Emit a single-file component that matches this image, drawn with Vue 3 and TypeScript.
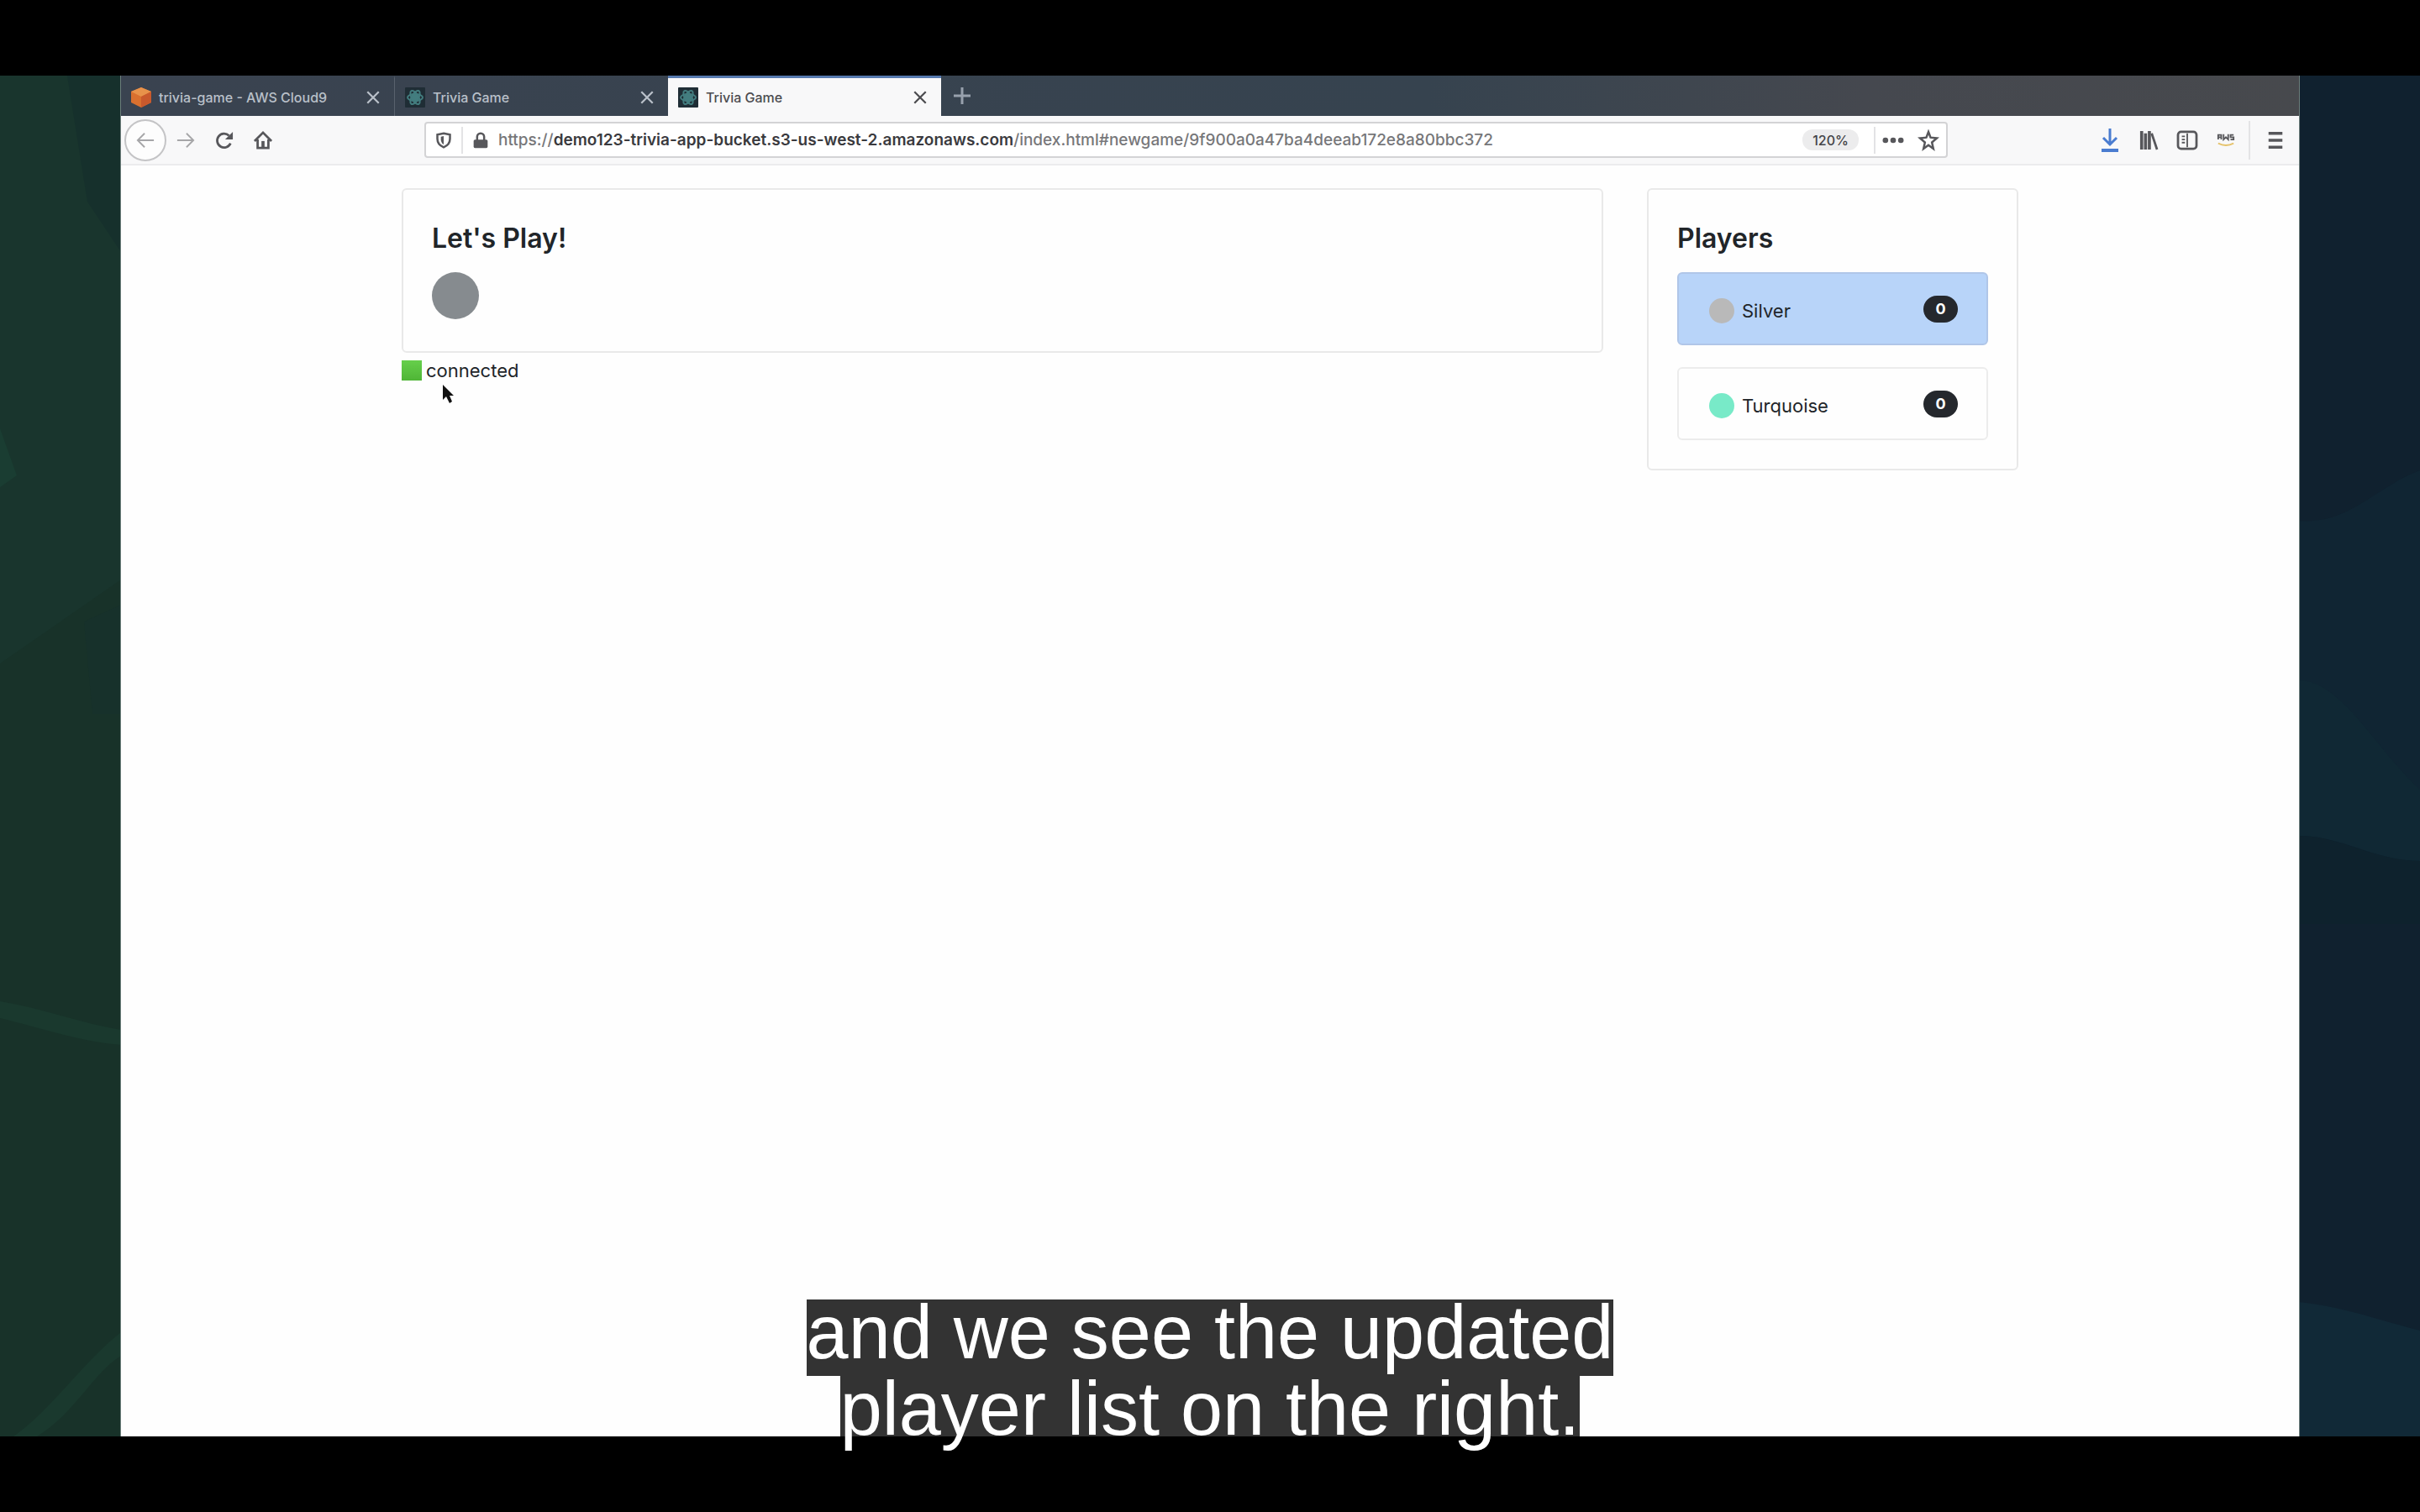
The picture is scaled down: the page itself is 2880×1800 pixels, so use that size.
<script setup lang="ts">
interface Tab {
  title: string
  icon: 'cube' | 'react'
  active: boolean
}

interface Player {
  name: string
  color: string
  score: number
  current: boolean
}

const tabs: Tab[] = [
  { title: 'trivia-game - AWS Cloud9', icon: 'cube', active: false },
  { title: 'Trivia Game', icon: 'react', active: false },
  { title: 'Trivia Game', icon: 'react', active: true },
]

const players: Player[] = [
  { name: 'Silver', color: '#b9b9b9', score: 0, current: true },
  { name: 'Turquoise', color: '#78eac8', score: 0, current: false },
]

const captionLines: string[] = ['and we see the updated', 'player list on the right.']
</script>

<template>
  <div class="screen">
    <div class="stage">
      <svg class="art" viewBox="0 0 144 1620" preserveAspectRatio="none" aria-hidden="true">
        <rect width="144" height="1620" fill="#183229" />
        <path d="M0 0H144V600L0 700Z" fill="#19352d" />
        <path d="M80 0H144V210L104 150Z" fill="#16302c" />
        <path d="M0 420L20 476L0 490Z" fill="#1a3d32" />
        <path d="M100 650L144 630V760H110Z" fill="#17312b" />
        <path d="M0 1102C50 1110 95 1128 144 1136V1154C95 1150 50 1134 0 1122Z" fill="#1a392e" />
        <path d="M16 1620C60 1590 100 1530 144 1496V1524C110 1545 90 1592 44 1620Z" fill="#1a392e" />
      </svg>

      <div class="browser">
        <div class="tabstrip" role="tablist">
          <div v-for="(tab, i) in tabs" :key="i" class="tab" :class="{ active: tab.active }">
            <button class="tab-main" type="button" role="tab" :aria-selected="tab.active">
              <svg v-if="tab.icon === 'cube'" class="favicon" viewBox="0 0 24 24" aria-hidden="true">
                <path d="M12 0L24 5V18L12 24L0 18V5Z" fill="#d9702f" />
                <path d="M12 0L24 5L12 11L0 5Z" fill="#e8924a" />
                <path d="M12 11L24 5V18L12 24Z" fill="#c9592c" />
              </svg>
              <svg v-else class="favicon" viewBox="0 0 24 24" aria-hidden="true">
                <rect width="24" height="24" rx="1" fill="#1f2d35" />
                <g fill="none" stroke="#437d7f" stroke-width="2">
                  <ellipse cx="12" cy="12" rx="9" ry="4" />
                  <ellipse cx="12" cy="12" rx="9" ry="4" transform="rotate(60 12 12)" />
                  <ellipse cx="12" cy="12" rx="9" ry="4" transform="rotate(120 12 12)" />
                </g>
                <circle cx="12" cy="12" r="4" fill="#437d7f" />
              </svg>
              <span>{{ tab.title }}</span>
            </button>
            <button class="close" type="button" aria-label="Close tab">
              <svg viewBox="0 0 16 16" aria-hidden="true"><path d="M2 2L14 14M14 2L2 14" /></svg>
            </button>
          </div>
          <button class="new-tab" type="button" aria-label="New tab">
            <svg viewBox="0 0 20 20" aria-hidden="true"><path d="M10 0V20M0 10H20" /></svg>
          </button>
        </div>

        <div class="toolbar">
          <div class="nav">
            <button class="back" type="button" aria-label="Back">
              <svg class="icon faint" viewBox="0 0 24 24" aria-hidden="true"><path d="M23 12H2M11 3L2 12L11 21" /></svg>
            </button>
            <button class="tool" type="button" aria-label="Forward">
              <svg class="icon faint" viewBox="0 0 24 24" aria-hidden="true"><path d="M1 12H22M13 3L22 12L13 21" /></svg>
            </button>
            <button class="tool" type="button" aria-label="Reload">
              <svg class="icon" viewBox="0 0 24 24" aria-hidden="true">
                <path class="thick" d="M20 16A9 9 0 1 1 18 6" />
                <path class="solid" d="M23 1V11H13Z" />
              </svg>
            </button>
            <button class="tool" type="button" aria-label="Home">
              <svg class="icon" viewBox="0 0 24 24" aria-hidden="true">
                <path class="thick" d="M1 13L12 2L23 13M5 11V22H19V11" />
                <path class="solid" d="M10 13H14V22H10Z" />
              </svg>
            </button>
          </div>

          <div class="urlbar">
            <button class="tool small" type="button" aria-label="Tracking protection">
              <svg class="icon" viewBox="0 0 24 24" aria-hidden="true">
                <path class="thick" d="M12 2L21 4V10C21 16 17 20 12 22C7 20 3 16 3 10V4Z" />
                <path class="solid" d="M12 6L8 7V11C8 14 10 17 12 18Z" />
              </svg>
            </button>
            <span class="divider"></span>
            <button class="tool small" type="button" aria-label="Site information">
              <svg class="icon" viewBox="0 0 24 24" aria-hidden="true">
                <path class="thick" d="M7 12V7A5 5 0 0 1 17 7V12" />
                <rect class="solid" x="2" y="11" width="20" height="12" rx="2" />
              </svg>
            </button>
            <div class="address" role="textbox" aria-label="Address" contenteditable="true" spellcheck="false"><span>https://</span><b>demo123-trivia-app-bucket.s3-us-west-2.amazonaws.com</b><span>/index.html#newgame/9f900a0a47ba4deeab172e8a80bbc372</span></div>
            <button class="zoom" type="button">120%</button>
            <span class="divider"></span>
            <button class="tool small" type="button" aria-label="Page actions">
              <svg class="icon" viewBox="0 0 24 24" aria-hidden="true">
                <circle class="solid" cx="1" cy="12" r="4" />
                <circle class="solid" cx="12" cy="12" r="4" />
                <circle class="solid" cx="23" cy="12" r="4" />
              </svg>
            </button>
            <button class="tool small" type="button" aria-label="Bookmark this page">
              <svg class="icon" viewBox="0 0 24 24" aria-hidden="true">
                <path class="thick" d="M12 0L15 8L24 9L17 15L19 24L12 19L5 24L7 15L0 9L9 8Z" />
              </svg>
            </button>
          </div>

          <div class="extras">
            <button class="tool" type="button" aria-label="Downloads">
              <svg class="icon blue" viewBox="0 0 24 28" aria-hidden="true">
                <path class="thick" d="M12 0V19M4 11L12 19L20 11" />
                <path class="bar" d="M2 26H22" />
              </svg>
            </button>
            <button class="tool" type="button" aria-label="Library">
              <svg class="icon" viewBox="0 0 24 24" aria-hidden="true">
                <path class="bar" d="M3 0V24M8 3V24M13 0V24" />
                <path class="thick" d="M16 3L23 24" />
              </svg>
            </button>
            <button class="tool" type="button" aria-label="Sidebars">
              <svg class="icon" viewBox="0 0 24 24" aria-hidden="true">
                <rect class="thick" x="0" y="1" width="24" height="22" rx="4" />
                <path d="M12 3V21M5 7H9M5 11H9M5 15H9" />
              </svg>
            </button>
            <button class="tool" type="button" aria-label="AWS extension">
              <svg class="icon" viewBox="0 0 24 24" aria-hidden="true">
                <path d="M2 11V5H6V11M2 8H6M9 4V11L12 8L15 11V4M22 5H18V8H22V11H18" />
                <path class="smile" d="M2 16C8 19 16 19 22 16" />
              </svg>
            </button>
            <span class="divider tall"></span>
            <button class="tool" type="button" aria-label="Menu">
              <svg class="icon" viewBox="0 0 24 24" aria-hidden="true"><path class="bar" d="M3 3H21M3 12H21M3 21H21" /></svg>
            </button>
          </div>
        </div>

        <main class="page">
          <section class="game">
            <div class="card">
              <h1>Let's Play!</h1>
              <div class="avatar"></div>
            </div>
            <p class="status">
              <span class="light"></span>connected
              <svg class="cursor" viewBox="0 0 14 24" aria-hidden="true">
                <path d="M1 1V19L5 15L9 23L12 21L9 14H14Z" />
              </svg>
            </p>
          </section>

          <aside class="card">
            <h2>Players</h2>
            <ul>
              <li v-for="player in players" :key="player.name" :class="{ current: player.current }">
                <span class="who">
                  <span class="dot" :style="{ background: player.color }"></span>
                  <span>{{ player.name }}</span>
                </span>
                <span class="badge">{{ player.score }}</span>
              </li>
            </ul>
          </aside>
        </main>
      </div>

      <svg class="art" viewBox="0 0 144 1620" preserveAspectRatio="none" aria-hidden="true">
        <rect width="144" height="1620" fill="#10212f" />
        <path d="M0 530C60 535 90 490 144 470V935C90 935 50 905 0 905Z" fill="#102533" />
        <path d="M0 720C50 720 90 800 144 850V935C90 935 50 905 0 905Z" fill="#102834" />
        <path d="M0 905C50 905 90 935 144 935V1010H0Z" fill="#0e222d" />
        <path d="M0 1460C50 1465 90 1480 144 1494V1620H0Z" fill="#112937" />
      </svg>
    </div>

    <div class="caption">
      <span v-for="line in captionLines" :key="line">{{ line }}</span>
    </div>
  </div>
</template>

<style>
body {
  margin: 0;
  background: #000;
}
</style>

<style scoped>
.screen {
  position: relative;
  box-sizing: border-box;
  display: flex;
  flex-direction: column;
  min-height: 100vh;
  padding: 90px 0;
  background: #000;
  color: #212529;
  font-family: Inter, "Liberation Sans", sans-serif;
}

.stage {
  flex: 1;
  display: grid;
  grid-template-columns: 5% 1fr 5%;
}

.art {
  display: block;
  width: 100%;
  height: 100%;
}

.browser {
  display: flex;
  flex-direction: column;
  min-width: 0;
  background: #fefefe;
  box-shadow: 0 0 0 1px #6b7d7a;
  clip-path: inset(0 -1px);
}

button {
  display: flex;
  align-items: center;
  justify-content: center;
  padding: 0;
  border: 0;
  background: none;
  color: inherit;
  font: inherit;
}

svg {
  display: block;
}

.tabstrip {
  display: flex;
  height: 48px;
  background: linear-gradient(90deg, #3a4350, #36434f 60%, #45484f 80%, #47494d);
  color: #b9c0c9;
  font-size: 16px;
  font-weight: 500;
}

.tab {
  box-sizing: border-box;
  display: flex;
  align-items: center;
  justify-content: space-between;
  width: 325px;
  padding: 0 15px 0 12px;
  border-top: 3px solid transparent;
}

.tab:first-child {
  width: 326px;
  border-right: 1px solid #59626e;
}

.tab.active {
  border-top-color: #5579ae;
  background: #f8f8f9;
  color: #4c4c50;
}

.tab-main {
  gap: 9px;
}

.favicon {
  width: 24px;
  height: 24px;
}

.close {
  width: 20px;
  height: 20px;
}

.close svg {
  width: 18px;
  height: 18px;
}

.new-tab {
  width: 50px;
}

.new-tab svg {
  width: 20px;
  height: 20px;
}

.close path,
.new-tab path {
  fill: none;
  stroke: currentColor;
  stroke-width: 2;
}

.new-tab path {
  stroke-width: 3;
  stroke: #98a1ad;
}

.toolbar {
  box-sizing: border-box;
  display: flex;
  align-items: center;
  height: 59px;
  border-bottom: 2px solid #ececed;
  background: #f8f8f9;
}

.nav {
  display: flex;
  align-items: center;
  width: 361px;
  padding-left: 4px;
  box-sizing: border-box;
}

.back {
  box-sizing: border-box;
  width: 50px;
  height: 50px;
  border: 2px solid #c4c4c6;
  border-radius: 50%;
  background: #fdfdfd;
}

.tool {
  width: 46px;
  height: 46px;
}

.tool.small {
  width: 42px;
  height: 38px;
}

.icon {
  width: 22px;
  height: 22px;
  overflow: visible;
  fill: none;
  stroke: #57575b;
  stroke-width: 2;
}

.small .icon {
  width: 20px;
  height: 20px;
}

.icon.faint {
  stroke: #a6a6a8;
}

.icon.blue {
  width: 24px;
  height: 28px;
  stroke: #4a7cd0;
}

.thick {
  stroke-width: 3;
}

.bar {
  stroke-width: 4;
}

.solid {
  fill: #57575b;
  stroke: none;
}

.icon .smile {
  stroke: #e5c26a;
}

.urlbar {
  box-sizing: border-box;
  flex: 1;
  display: flex;
  align-items: center;
  min-width: 0;
  height: 43px;
  border: 2px solid #d3d3d5;
  border-radius: 4px;
  background: #fff;
}

.divider {
  width: 2px;
  height: 32px;
  background: #e3e3e5;
}

.divider.tall {
  height: 46px;
  margin: 0 7px 0 4px;
}

.address {
  flex: 1;
  min-width: 0;
  overflow: hidden;
  color: #77777a;
  font-size: 19px;
  font-weight: 500;
  line-height: 28px;
  white-space: nowrap;
  outline: none;
}

.address b {
  color: #3a3a3e;
  font-weight: 600;
}

.zoom {
  width: 67px;
  height: 25px;
  margin-right: 18px;
  border-radius: 12px;
  background: #ececed;
  color: #444448;
  font-size: 16px;
  font-weight: 500;
}

.extras {
  display: flex;
  align-items: center;
  justify-content: flex-end;
  box-sizing: border-box;
  width: 418px;
  padding-right: 5px;
}

.page {
  display: grid;
  grid-template-columns: minmax(0, 1fr) 442px;
  align-items: start;
  gap: 52px;
  box-sizing: border-box;
  width: 100%;
  max-width: 1924px;
  margin: 0 auto;
  padding-top: 27px;
}

.card {
  box-sizing: border-box;
  padding: 34px;
  border: 2px solid #e9e9e9;
  border-radius: 6px;
  background: #fefefe;
}

h1,
h2 {
  margin: 0 0 16px;
  font-size: 32px;
  font-weight: 600;
  line-height: 48px;
}

.avatar {
  width: 56px;
  height: 56px;
  margin-bottom: 4px;
  border-radius: 50%;
  background: #868b8f;
}

.status {
  position: relative;
  display: flex;
  align-items: center;
  gap: 5px;
  margin: 5px 0 0;
  font-size: 22px;
  line-height: 32px;
}

.light {
  width: 24px;
  height: 24px;
  background: linear-gradient(#66cf4b, #4fb536);
}

.cursor {
  position: absolute;
  top: 32px;
  left: 48px;
  width: 14px;
  height: 24px;
  fill: #111;
}

ul {
  display: flex;
  flex-direction: column;
  gap: 26px;
  margin: 0;
  padding: 0;
  list-style: none;
}

li {
  box-sizing: border-box;
  display: flex;
  align-items: center;
  justify-content: space-between;
  height: 87px;
  padding: 0 34px 0 36px;
  border: 2px solid #ececec;
  border-radius: 6px;
}

li.current {
  border-color: #b0c6e8;
  background: #b8d4f9;
}

.who {
  display: flex;
  align-items: center;
  gap: 9px;
  padding-top: 4px;
  font-size: 22px;
}

.dot {
  width: 30px;
  height: 30px;
  border-radius: 50%;
}

.badge {
  width: 41px;
  border-radius: 16px;
  background: #25282d;
  color: #fff;
  font-size: 18px;
  font-weight: 700;
  line-height: 32px;
  text-align: center;
}

.caption {
  position: absolute;
  right: 0;
  bottom: 71px;
  left: 0;
  display: flex;
  flex-direction: column;
  align-items: center;
  color: #fff;
  font-family: "Liberation Sans", Arial, sans-serif;
  font-size: 90px;
  line-height: 78px;
}

.caption span {
  height: 91px;
  background: rgba(0, 0, 0, 0.8);
}
</style>
